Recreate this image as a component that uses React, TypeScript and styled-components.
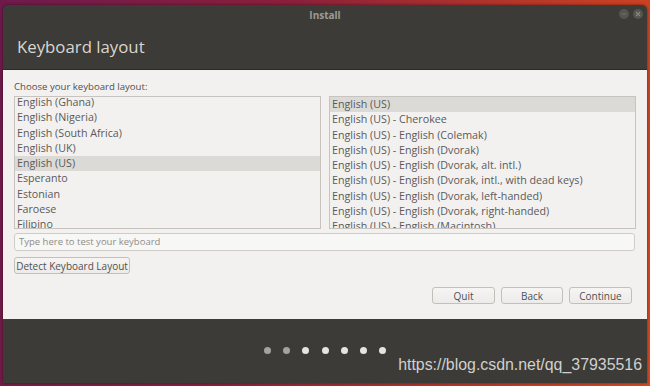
import React, { FunctionComponent } from "react"
import styled, { createGlobalStyle } from "styled-components"

const GlobalStyle = createGlobalStyle`
  html, body {
    margin: 0;
    padding: 0;
  }
  body {
    width: 650px;
    height: 386px;
    overflow: hidden;
    background: linear-gradient(100deg, #6e1a4c 0%, #8a1f3c 40%, #b3352a 70%, #d9481f 100%);
    font-family: "Open Sans", "DejaVu Sans", sans-serif;
  }
`

const Desktop = styled.div`
  width: 650px;
  height: 386px;
  box-sizing: border-box;
  padding: 5px 3px 3px 3px;
`

const Window = styled.div`
  display: flex;
  flex-direction: column;
  height: 378px;
  border-radius: 5px 5px 0 0;
  overflow: hidden;
  box-shadow: 0 0 3px rgba(0, 0, 0, 0.5);
`

const Header = styled.div`
  display: flex;
  flex-direction: column;
  height: 65px;
  background: #3c3b37;
  border-bottom: 1px solid #2b2a27;
  box-sizing: border-box;
`

const TitleBar = styled.div`
  position: relative;
  display: flex;
  align-items: center;
  justify-content: center;
  height: 19px;
  color: #9e9b95;
  font-size: 10px;
  font-weight: bold;
`

const Controls = styled.div`
  position: absolute;
  right: 4px;
  top: 4px;
  display: flex;
  gap: 4px;
`

const ControlDot = styled.div`
  width: 10px;
  height: 10px;
  border-radius: 50%;
  background: #57554f;
  display: flex;
  align-items: center;
  justify-content: center;
`

const PageTitle = styled.div`
  padding: 11px 0 0 14px;
  color: #dad6cf;
  font-size: 16.8px;
  line-height: 24px;
`

const Content = styled.div`
  display: flex;
  flex-direction: column;
  height: 249px;
  box-sizing: border-box;
  background: #f2f1f0;
  padding: 10px 11px 15px 11px;
  color: #4c4c4c;
  font-size: 10px;
`

const Label = styled.div`
  line-height: 13px;
  margin-bottom: 3px;
  color: #505050;
  font-size: 9.6px;
`

const Lists = styled.div`
  display: flex;
  gap: 8px;
  height: 133px;
`

const List = styled.div<{ $offset: number }>`
  flex: 1;
  border: 1px solid #c7c4bf;
  background: #f2f1f0;
  overflow: hidden;
  box-sizing: border-box;
  & > div:first-child {
    margin-top: ${(p) => p.$offset}px;
  }
`

const Row = styled.div<{ $selected?: boolean }>`
  height: 15.3px;
  line-height: 15.3px;
  padding-left: 2px;
  white-space: nowrap;
  font-size: 10.7px;
  color: #5a5a5a;
  background: ${(p) => (p.$selected ? "#dcdad6" : "transparent")};
`

const TestInput = styled.div`
  margin-top: 4px;
  margin-right: 1px;
  height: 18px;
  box-sizing: border-box;
  border: 1px solid #cfccc7;
  border-radius: 3px;
  background: #f7f7f6;
  padding-left: 4px;
  line-height: 16px;
  font-size: 9.5px;
  color: #8e8c88;
`

const Button = styled.div<{ $width: number }>`
  width: ${(p) => p.$width}px;
  height: 17px;
  box-sizing: border-box;
  border: 1px solid #c3c0ba;
  border-radius: 3px;
  background: linear-gradient(#f6f5f4, #edebe9);
  display: flex;
  align-items: center;
  justify-content: center;
  color: #505050;
  white-space: nowrap;
`

const DetectRow = styled.div`
  margin-top: 6px;
  display: flex;
`

const Actions = styled.div`
  margin-top: auto;
  display: flex;
  justify-content: flex-end;
  gap: 6px;
  padding-right: 4px;
`

const Footer = styled.div`
  flex: 1;
  background: #3c3b37;
  display: flex;
  flex-direction: column;
  align-items: center;
`

const Dots = styled.div`
  margin-top: 28px;
  display: flex;
  gap: 12.3px;
`

const Dot = styled.div<{ $done?: boolean }>`
  width: 7px;
  height: 7px;
  border-radius: 50%;
  background: ${(p) => (p.$done ? "#a3a3a1" : "#e4e4e3")};
`

const Watermark = styled.div`
  align-self: flex-end;
  margin-top: 1px;
  padding-right: 5px;
  font-family: "Liberation Sans", Arial, sans-serif;
  font-size: 15.9px;
  line-height: 19px;
  color: #d0d0ce;
`

const layouts = [
  "English (Ghana)",
  "English (Nigeria)",
  "English (South Africa)",
  "English (UK)",
  "English (US)",
  "Esperanto",
  "Estonian",
  "Faroese",
  "Filipino",
]

const variants = [
  "English (US)",
  "English (US) - Cherokee",
  "English (US) - English (Colemak)",
  "English (US) - English (Dvorak)",
  "English (US) - English (Dvorak, alt. intl.)",
  "English (US) - English (Dvorak, intl., with dead keys)",
  "English (US) - English (Dvorak, left-handed)",
  "English (US) - English (Dvorak, right-handed)",
  "English (US) - English (Macintosh)",
]

const App: FunctionComponent = () => {
  return (
    <>
      <GlobalStyle />
      <Desktop>
        <Window>
          <Header>
            <TitleBar>
              Install
              <Controls>
                <ControlDot>
                  <svg width="6" height="6" viewBox="0 0 6 6">
                    <path d="M0.5 3 H5.5" stroke="#77746e" strokeWidth="1.2" />
                  </svg>
                </ControlDot>
                <ControlDot>
                  <svg width="6" height="6" viewBox="0 0 6 6">
                    <path d="M1 1 L5 5 M5 1 L1 5" stroke="#8a8781" strokeWidth="1.1" />
                  </svg>
                </ControlDot>
              </Controls>
            </TitleBar>
            <PageTitle>Keyboard layout</PageTitle>
          </Header>
          <Content>
            <Label>Choose your keyboard layout:</Label>
            <Lists>
              <List $offset={-2}>
                {layouts.map((l) => (
                  <Row key={l} $selected={l === "English (US)"}>{l}</Row>
                ))}
              </List>
              <List $offset={0}>
                {variants.map((v, i) => (
                  <Row key={v} $selected={i === 0}>{v}</Row>
                ))}
              </List>
            </Lists>
            <TestInput>Type here to test your keyboard</TestInput>
            <DetectRow>
              <Button $width={116}>Detect Keyboard Layout</Button>
            </DetectRow>
            <Actions>
              <Button $width={63}>Quit</Button>
              <Button $width={62}>Back</Button>
              <Button $width={63}>Continue</Button>
            </Actions>
          </Content>
          <Footer>
            <Dots>
              {[0, 1, 2, 3, 4, 5, 6].map((i) => (
                <Dot key={i} $done={i < 2} />
              ))}
            </Dots>
            <Watermark>https://blog.csdn.net/qq_37935516</Watermark>
          </Footer>
        </Window>
      </Desktop>
    </>
  )
}

export default App
